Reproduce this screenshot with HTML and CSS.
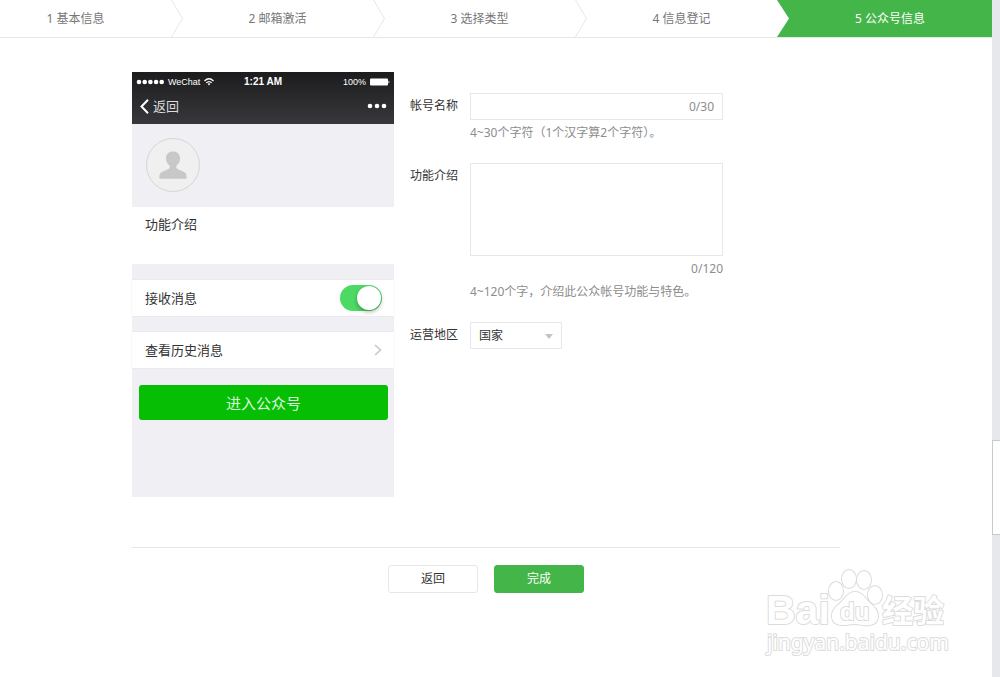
FILE: index.html
```html
<!DOCTYPE html>
<html lang="zh-CN">
<head>
    <meta charset="UTF-8">
    <meta name="viewport" content="width=device-width, initial-scale=1.0">
    <title>公众号信息</title>
    <link rel="stylesheet" href="styles.css">
</head>
<body>
    <div class="page">
        <ol class="steps">
            <li class="step">1 基本信息</li>
            <li class="step">2 邮箱激活</li>
            <li class="step">3 选择类型</li>
            <li class="step">4 信息登记</li>
            <li class="step current">5 公众号信息</li>
        </ol>

        <main class="content">
            <form>
                <div class="columns">
                    <section class="phone">
                        <div class="phone-top">
                            <div class="status-bar">
                                <div class="carrier">
                                    <svg width="28" height="6" viewBox="0 0 28 6" fill="#fff">
                                        <circle cx="3" cy="3" r="2.3"/>
                                        <circle cx="8.7" cy="3" r="2.3"/>
                                        <circle cx="14.4" cy="3" r="2.3"/>
                                        <circle cx="20.1" cy="3" r="2.3"/>
                                        <circle cx="25.7" cy="3" r="2.3"/>
                                    </svg>
                                    <span>WeChat</span>
                                    <svg width="10" height="8" viewBox="0 0 10 8" fill="none" stroke="#fff" stroke-width="1.3">
                                        <path d="M0.5 3 Q5 -1.4 9.5 3"/>
                                        <path d="M2.3 4.9 Q5 2.2 7.7 4.9"/>
                                        <path d="M3.6 5.8 Q5 4.8 6.4 5.8 L5 7.6 Z" fill="#fff" stroke="none"/>
                                    </svg>
                                </div>
                                <strong class="time">1:21 AM</strong>
                                <div class="battery">
                                    <span>100%</span>
                                    <svg width="20" height="8" viewBox="0 0 20 8" fill="#fff">
                                        <rect x="0" y="0.5" width="18" height="7" rx="1"/>
                                        <path d="M18.5 2.5 Q20.5 4 18.5 5.5 Z"/>
                                    </svg>
                                </div>
                            </div>
                            <div class="nav-bar">
                                <a class="back" href="#">
                                    <svg width="9" height="15" viewBox="0 0 9 15" fill="none" stroke="#fff" stroke-width="2">
                                        <path d="M8 0.7 L1.5 7.5 L8 14.3"/>
                                    </svg>
                                    返回
                                </a>
                                <svg width="20" height="6" viewBox="0 0 20 6" fill="#fff">
                                    <circle cx="3" cy="3" r="2.3"/>
                                    <circle cx="10" cy="3" r="2.3"/>
                                    <circle cx="17" cy="3" r="2.3"/>
                                </svg>
                            </div>
                        </div>
                        <div class="profile">
                            <div class="avatar">
                                <svg width="28" height="28" viewBox="0 0 28 28" fill="#c8c8c8">
                                    <path d="M14 0.5 C9.800 0.5 7 3.2 7 7.2 C7 10.5 8.3 12.6 10.2 14.3 C11.3 16 10.8 17.6 8.5 18.6 L3.5 20.8 C0.8 22 0.3 23.500 0.3 27 Q0.3 27.8 1.3 27.8 H26.7 Q27.7 27.8 27.7 27 C27.7 23.5 27.2 22 24.5 20.8 L19.5 18.6 C17.2 17.6 16.7 16 17.8 14.3 C19.7 12.6 21 10.5 21 7.2 C21 3.2 18.2 0.5 14 0.5 Z"/>
                                </svg>
                            </div>
                        </div>
                        <div class="intro">功能介绍</div>
                        <div class="phone-row">
                            <label for="receive">接收消息</label>
                            <input class="switch" type="checkbox" id="receive" checked>
                        </div>
                        <a class="phone-row" href="#">
                            查看历史消息
                            <svg width="8" height="12" viewBox="0 0 8 12" fill="none" stroke="#c7c7cc" stroke-width="1.6">
                                <path d="M1 1 L6.5 6 L1 11"/>
                            </svg>
                        </a>
                        <button class="enter" type="button">进入公众号</button>
                    </section>

                    <section class="fields">
                        <div class="form-group">
                            <label for="accountName">帐号名称</label>
                            <div class="control">
                                <div class="input-box">
                                    <input type="text" id="accountName" name="accountName">
                                    <span class="count">0/30</span>
                                </div>
                                <p class="hint">4~30个字符（1个汉字算2个字符）。</p>
                            </div>
                        </div>
                        <div class="form-group">
                            <label for="description">功能介绍</label>
                            <div class="control">
                                <textarea id="description" name="description"></textarea>
                                <p class="count total">0/120</p>
                                <p class="hint">4~120个字，介绍此公众帐号功能与特色。</p>
                            </div>
                        </div>
                        <div class="form-group">
                            <label for="country">运营地区</label>
                            <div class="select-box">
                                <select id="country" name="country">
                                    <option>国家</option>
                                </select>
                            </div>
                        </div>
                    </section>
                </div>

                <div class="actions">
                    <button class="btn" type="button">返回</button>
                    <button class="btn btn-primary" type="submit">完成</button>
                </div>
            </form>
        </main>
    </div>

    <aside class="side-strip">
        <div class="side-panel"></div>
    </aside>

    <svg class="watermark" width="190" height="92" viewBox="0 0 190 92">
        <text x="6" y="57" class="mark-latin">Bai</text>
        <ellipse cx="76" cy="24" rx="7" ry="9"/>
        <ellipse cx="89" cy="12" rx="7" ry="9"/>
        <ellipse cx="104" cy="13" rx="7" ry="9"/>
        <ellipse cx="115" cy="28" rx="7" ry="9"/>
        <path d="M95 25 C87 25 85 33 78 38 C68 46 71 58 82 58 C88 58 90 57 95 57 C100 57 103 59 109 58 C120 57 121 46 112 38 C105 32 103 25 95 25 Z"/>
        <text x="80" y="53" class="mark-du">du</text>
        <text x="122" y="55" class="mark-cjk">经验</text>
        <text x="7" y="83" class="mark-url">jingyan.baidu.com</text>
    </svg>
</body>
</html>
```

FILE: styles.css
```css
* {
    margin: 0;
    padding: 0;
    box-sizing: border-box;
}

body {
    display: flex;
    min-height: 100vh;
    background-color: #fff;
    color: #333;
    font-family: "Noto Sans", "Noto Sans CJK SC", sans-serif;
    font-size: 12px;
    line-height: 20px;
}

button,
input,
textarea,
select {
    font: inherit;
    color: inherit;
}

a {
    color: inherit;
    text-decoration: none;
}

svg {
    display: block;
}

.page {
    flex: 1;
}

/* Steps */
.steps {
    display: grid;
    grid-template-columns: 171fr 202fr 202fr 202fr 215fr;
    height: 38px;
    border-bottom: 1px solid #e7e7eb;
    list-style: none;
    color: #777;
}

.step {
    position: relative;
    padding-left: 11px;
    line-height: 37px;
    text-align: center;
}

.step:first-child {
    padding: 0 20px 0 0;
}

.step + .step::before {
    content: "";
    position: absolute;
    left: 0;
    top: 0;
    width: 12px;
    height: 37px;
    background-color: #e7e7eb;
    clip-path: polygon(0 0, 1px 0, 100% 50%, 1px 100%, 0 100%, 11px 50%);
}

.step.current {
    background-color: #44b549;
    color: #fff;
}

.step.current::before {
    background-color: #fff;
    clip-path: polygon(0 0, 100% 50%, 0 100%);
}

/* Content */
.content {
    max-width: 840px;
    padding: 34px 0 0 132px;
}

.columns {
    display: flex;
    gap: 16px;
    padding-bottom: 50px;
    border-bottom: 1px solid #e7e7eb;
}

/* Phone preview */
.phone {
    width: 262px;
    min-height: 425px;
    background-color: #efeff4;
    font-size: 13px;
}

.phone-top {
    background: linear-gradient(#1c1c1e, #38383c);
    color: #fff;
}

.status-bar {
    display: grid;
    grid-template-columns: 1fr auto 1fr;
    align-items: center;
    height: 16px;
    padding: 0 4px;
    font-family: "Liberation Sans", sans-serif;
    font-size: 9px;
}

.carrier,
.battery {
    display: flex;
    align-items: center;
    gap: 4px;
}

.battery {
    justify-content: flex-end;
}

.time {
    font-size: 10px;
}

.nav-bar {
    display: flex;
    align-items: center;
    justify-content: space-between;
    height: 36px;
    padding: 0 7px 0 8px;
}

.back {
    display: flex;
    align-items: center;
    gap: 4px;
    color: #ddd;
}

.profile {
    height: 83px;
    padding: 14px;
}

.avatar {
    display: flex;
    align-items: center;
    justify-content: center;
    width: 54px;
    height: 54px;
    border: 1px solid #d6d6d8;
    border-radius: 50%;
    background-color: #f0f0f0;
}

.intro {
    height: 57px;
    padding: 7px 13px;
    background-color: #fff;
}

.phone-row {
    display: flex;
    align-items: center;
    justify-content: space-between;
    height: 36px;
    margin-top: 16px;
    padding: 0 12px 0 13px;
    background-color: #fff;
    box-shadow: 0 0 1px #d5d5da;
}

.switch {
    appearance: none;
    width: 42px;
    height: 26px;
    border-radius: 13px;
    background-color: #4cd964;
}

.switch::before {
    content: "";
    display: block;
    width: 24px;
    height: 24px;
    margin: 1px 1px 1px 17px;
    border-radius: 50%;
    background-color: #fff;
    box-shadow: 0 2px 4px rgba(0, 0, 0, 0.3);
}

.enter {
    display: block;
    width: calc(100% - 13px);
    height: 35px;
    margin: 17px 6px 0 7px;
    border: none;
    border-radius: 3px;
    background-color: #06bf04;
    color: #ddf7dd;
    font-size: 15px;
}

/* Form */
.fields {
    padding-top: 21px;
}

.form-group {
    display: flex;
    margin-bottom: 20px;
}

.form-group > label {
    width: 60px;
    padding-top: 3px;
}

.control {
    width: 253px;
}

.input-box {
    display: flex;
    align-items: center;
    height: 27px;
    padding-right: 8px;
    border: 1px solid #e7e7eb;
}

.input-box input {
    flex: 1;
    min-width: 0;
    border: none;
    outline: none;
}

.count,
.hint {
    color: #8d8d8d;
}

.hint {
    margin-top: 3px;
}

.total {
    margin-top: 3px;
    text-align: right;
}

textarea {
    display: block;
    width: 100%;
    height: 93px;
    border: 1px solid #e7e7eb;
    resize: none;
    outline: none;
}

.select-box {
    position: relative;
    width: 92px;
}

.select-box select {
    appearance: none;
    width: 100%;
    height: 27px;
    padding: 0 8px;
    border: 1px solid #e7e7eb;
    border-radius: 0;
    background-color: #fff;
}

.select-box::after {
    content: "";
    position: absolute;
    right: 9px;
    top: 12px;
    border: 4px solid transparent;
    border-top: 5px solid #c4c4c4;
    border-bottom: none;
    pointer-events: none;
}

/* Buttons */
.actions {
    display: flex;
    justify-content: center;
    gap: 16px;
    padding-top: 17px;
}

.btn {
    width: 90px;
    height: 28px;
    border: 1px solid #e7e7eb;
    border-radius: 3px;
    background-color: #fff;
}

.btn-primary {
    border-color: #44b549;
    background-color: #44b549;
    color: #fff;
}

/* Side strip */
.side-strip {
    width: 8px;
    padding-top: 440px;
    background-color: #e7e8eb;
}

.side-panel {
    height: 95px;
    border: 1px solid #c9c9cb;
    border-width: 1px 0 1px 1px;
    background-color: #fff;
}

/* Watermark */
.watermark {
    position: absolute;
    right: 50px;
    bottom: 18px;
    overflow: visible;
    fill: #fff;
    stroke: #dcdcdc;
    stroke-width: 2px;
    stroke-linejoin: round;
    paint-order: stroke;
    pointer-events: none;
}

.watermark text {
    font-weight: bold;
}

.watermark .mark-latin {
    font-family: "Liberation Sans", sans-serif;
    font-size: 41px;
}

.watermark .mark-du {
    font-family: "Liberation Sans", sans-serif;
    font-size: 24px;
}

.watermark .mark-cjk {
    font-family: "Noto Sans CJK SC", sans-serif;
    font-size: 31px;
}

.watermark .mark-url {
    font-family: "Noto Sans", sans-serif;
    font-size: 21px;
    font-weight: normal;
}
```
